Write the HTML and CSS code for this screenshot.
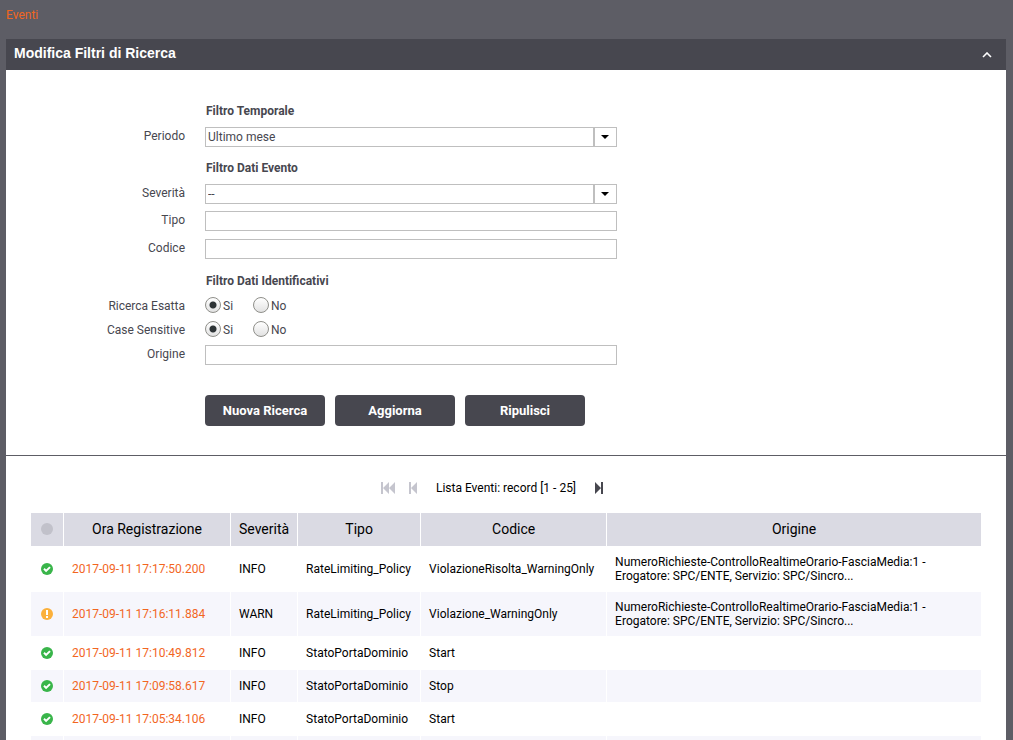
FILE: index.html
```html
<!DOCTYPE html>
<html lang="it">
<head>
    <meta charset="UTF-8">
    <meta name="viewport" content="width=device-width, initial-scale=1.0">
    <title>Eventi</title>
    <link rel="stylesheet" href="styles.css">
</head>
<body>
    <svg class="defs" width="0" height="0">
        <symbol id="ok" viewBox="0 0 12 12">
            <circle cx="6" cy="6" r="6" fill="#39b54a"/>
            <path d="M3 5.8l2.1 2.1 3.9-3.8" fill="none" stroke="#fff" stroke-width="2"/>
        </symbol>
        <symbol id="warn" viewBox="0 0 12 12">
            <circle cx="6" cy="6" r="6" fill="#fbb03b"/>
            <path d="M5 2h2v5H5zM5 8h2v2H5z" fill="#fff"/>
        </symbol>
    </svg>

    <nav class="breadcrumb"><a href="#">Eventi</a></nav>

    <div class="panel">
        <div class="panel-header">
            <h1>Modifica Filtri di Ricerca</h1>
            <button type="button" class="toggle" aria-label="Chiudi filtri">
                <svg width="10" height="6" viewBox="0 0 10 6"><path d="M1 5l4-4 4 4" fill="none" stroke="#fff" stroke-width="1.6"/></svg>
            </button>
        </div>

        <form class="filters">
            <h2 class="title">Filtro Temporale</h2>
            <div class="row row-select">
                <label for="periodo">Periodo</label>
                <div class="select-box">
                    <select id="periodo"><option>Ultimo mese</option></select>
                    <svg class="arrow" width="8" height="4" viewBox="0 0 8 4"><path d="M0 0h8L4 4z"/></svg>
                </div>
            </div>

            <h2 class="title">Filtro Dati Evento</h2>
            <div class="row row-select">
                <label for="severita">Severità</label>
                <div class="select-box">
                    <select id="severita"><option>--</option></select>
                    <svg class="arrow" width="8" height="4" viewBox="0 0 8 4"><path d="M0 0h8L4 4z"/></svg>
                </div>
            </div>
            <div class="row">
                <label for="tipo">Tipo</label>
                <input type="text" id="tipo">
            </div>
            <div class="row">
                <label for="codice">Codice</label>
                <input type="text" id="codice">
            </div>

            <h2 class="title">Filtro Dati Identificativi</h2>
            <div class="row row-radio" role="radiogroup" aria-labelledby="esatta">
                <span class="label" id="esatta">Ricerca Esatta</span>
                <label class="radio"><input type="radio" name="esatta" checked>Si</label>
                <label class="radio"><input type="radio" name="esatta">No</label>
            </div>
            <div class="row row-radio" role="radiogroup" aria-labelledby="sensitive">
                <span class="label" id="sensitive">Case Sensitive</span>
                <label class="radio"><input type="radio" name="sensitive" checked>Si</label>
                <label class="radio"><input type="radio" name="sensitive">No</label>
            </div>
            <div class="row">
                <label for="origine">Origine</label>
                <input type="text" id="origine">
            </div>

            <div class="buttons">
                <button type="button">Nuova Ricerca</button>
                <button type="button">Aggiorna</button>
                <button type="button">Ripulisci</button>
            </div>
        </form>

        <div class="pager">
            <button type="button" disabled aria-label="Inizio">
                <svg width="14" height="12" viewBox="0 0 14 12"><path d="M0 0h2v12H0zM8 0v12L2 6zM14 0v12L8 6z"/></svg>
            </button>
            <button type="button" disabled aria-label="Precedente">
                <svg width="8" height="12" viewBox="0 0 8 12"><path d="M0 0h2v12H0zM8 0v12L2 6z"/></svg>
            </button>
            <span>Lista Eventi: record [1 - 25]</span>
            <button type="button" aria-label="Successiva">
                <svg width="8" height="12" viewBox="0 0 8 12"><path d="M6 0h2v12H6zM0 0v12l6-6z"/></svg>
            </button>
        </div>

        <table class="events">
            <thead>
                <tr>
                    <th class="col-icon"><svg class="dot" width="12" height="12" viewBox="0 0 12 12"><circle cx="6" cy="6" r="6"/></svg></th>
                    <th class="col-date">Ora Registrazione</th>
                    <th class="col-level">Severità</th>
                    <th class="col-type">Tipo</th>
                    <th class="col-code">Codice</th>
                    <th>Origine</th>
                </tr>
            </thead>
            <tbody>
                <tr>
                    <td><svg width="12" height="12"><use href="#ok"/></svg></td>
                    <td><a href="#">2017-09-11 17:17:50.200</a></td>
                    <td>INFO</td>
                    <td>RateLimiting_Policy</td>
                    <td>ViolazioneRisolta_WarningOnly</td>
                    <td>NumeroRichieste-ControlloRealtimeOrario-FasciaMedia:1 - Erogatore: SPC/ENTE, Servizio: SPC/Sincro...</td>
                </tr>
                <tr>
                    <td><svg width="12" height="12"><use href="#warn"/></svg></td>
                    <td><a href="#">2017-09-11 17:16:11.884</a></td>
                    <td>WARN</td>
                    <td>RateLimiting_Policy</td>
                    <td>Violazione_WarningOnly</td>
                    <td>NumeroRichieste-ControlloRealtimeOrario-FasciaMedia:1 - Erogatore: SPC/ENTE, Servizio: SPC/Sincro...</td>
                </tr>
                <tr>
                    <td><svg width="12" height="12"><use href="#ok"/></svg></td>
                    <td><a href="#">2017-09-11 17:10:49.812</a></td>
                    <td>INFO</td>
                    <td>StatoPortaDominio</td>
                    <td>Start</td>
                    <td></td>
                </tr>
                <tr>
                    <td><svg width="12" height="12"><use href="#ok"/></svg></td>
                    <td><a href="#">2017-09-11 17:09:58.617</a></td>
                    <td>INFO</td>
                    <td>StatoPortaDominio</td>
                    <td>Stop</td>
                    <td></td>
                </tr>
                <tr>
                    <td><svg width="12" height="12"><use href="#ok"/></svg></td>
                    <td><a href="#">2017-09-11 17:05:34.106</a></td>
                    <td>INFO</td>
                    <td>StatoPortaDominio</td>
                    <td>Start</td>
                    <td></td>
                </tr>
                <tr>
                    <td></td>
                    <td></td>
                    <td></td>
                    <td></td>
                    <td></td>
                    <td></td>
                </tr>
            </tbody>
        </table>
    </div>
</body>
</html>
```
FILE: styles.css
```css
* {
    box-sizing: border-box;
}
body {
    margin: 0;
    padding: 0 7px 0 6px;
    background: #5d5d65;
    color: #000000;
    font-family: Roboto, sans-serif;
    font-size: 12px;
    line-height: 14px;
}
a {
    color: #f2661f;
    text-decoration: none;
}
button, input, select {
    font-family: inherit;
    font-size: 12px;
}
.defs {
    position: absolute;
}
.breadcrumb {
    padding: 8px 0 17px;
}
.panel {
    background: #ffffff;
}
.panel-header {
    display: flex;
    align-items: center;
    justify-content: space-between;
    height: 31px;
    padding: 0 14px 4px 8px;
    background: #47474f;
}
.panel-header h1 {
    margin: 0;
    color: #ffffff;
    font-family: "Liberation Sans", Arial, sans-serif;
    font-size: 14px;
    font-weight: bold;
}
.toggle {
    display: flex;
    padding: 5px 0 0;
    border: 0;
    background: none;
    cursor: pointer;
}
.filters {
    display: flex;
    flex-direction: column;
    padding: 27px 0 29px;
    border-bottom: 1px solid #5d5d65;
    color: #47474f;
}
.title {
    margin: 4px 0 6px 200px;
    font-size: 12px;
    font-weight: bold;
    line-height: 20px;
}
.row {
    display: flex;
    height: 20px;
    margin-bottom: 8px;
}
.row > label, .label {
    width: 179px;
    margin-right: 20px;
    line-height: 18px;
    text-align: right;
}
.row-select {
    margin-bottom: 7px;
}
.row-radio {
    height: 16px;
}
.row input[type="text"], .select-box {
    width: 412px;
    height: 20px;
}
.row input[type="text"], .select-box select {
    padding: 0 2px;
    border: 1px solid #bfbfbf;
    border-radius: 0;
    background: #ffffff;
    color: #47474f;
}
.select-box {
    position: relative;
}
.select-box select {
    width: 100%;
    height: 100%;
    appearance: none;
    background: linear-gradient(#bfbfbf, #bfbfbf) right 21px top 0 / 2px 100% no-repeat #ffffff;
}
.arrow {
    position: absolute;
    top: 8px;
    right: 8px;
    pointer-events: none;
}
.row .radio {
    display: flex;
    align-items: flex-start;
    gap: 2px;
    width: 48px;
    margin: 0;
    text-align: left;
}
.radio input {
    width: 16px;
    height: 16px;
    margin: 0;
    appearance: none;
    border: 1px solid #8f8f8a;
    border-radius: 50%;
    background: linear-gradient(#ffffff, #e2e2e2);
}
.radio input:checked {
    background: radial-gradient(circle, #2e3436 3px, transparent 4px), linear-gradient(#ffffff, #e2e2e2);
}
.buttons {
    display: flex;
    gap: 10px;
    margin: 22px 0 0 199px;
}
.buttons button {
    width: 120px;
    height: 31px;
    border: 0;
    border-radius: 4px;
    background: #47474f;
    color: #ffffff;
    font-size: 13px;
    font-weight: bold;
    cursor: pointer;
}
.pager {
    display: flex;
    align-items: center;
    justify-content: center;
    padding: 20px 25px 12px 0;
}
.pager span {
    margin: 0 10px;
}
.pager button {
    display: flex;
    align-items: center;
    justify-content: center;
    width: 25px;
    height: 24px;
    padding: 0;
    border: 0;
    background: none;
    fill: #47474f;
}
.pager button:disabled {
    fill: #c5c5ce;
}
.events {
    width: calc(100% - 48px);
    margin: 0 24px;
    border-spacing: 1px;
}
.events th {
    height: 33px;
    padding: 0 8px 2px;
    background: #dadae3;
    font-size: 14px;
    font-weight: normal;
}
.events td {
    height: 32px;
    padding: 8px;
}
.events tr:nth-child(even) td {
    background: #f6f6fc;
}
.events td:first-child {
    padding: 0 10px;
}
.events th:first-child {
    padding: 0 10px 2px;
}
.events svg {
    display: block;
}
.dot {
    fill: #c1c1ca;
}
.col-icon {
    width: 32px;
}
.col-date {
    width: 166px;
}
.col-level {
    width: 66px;
}
.col-type {
    width: 122px;
}
.col-code {
    width: 185px;
}
```
